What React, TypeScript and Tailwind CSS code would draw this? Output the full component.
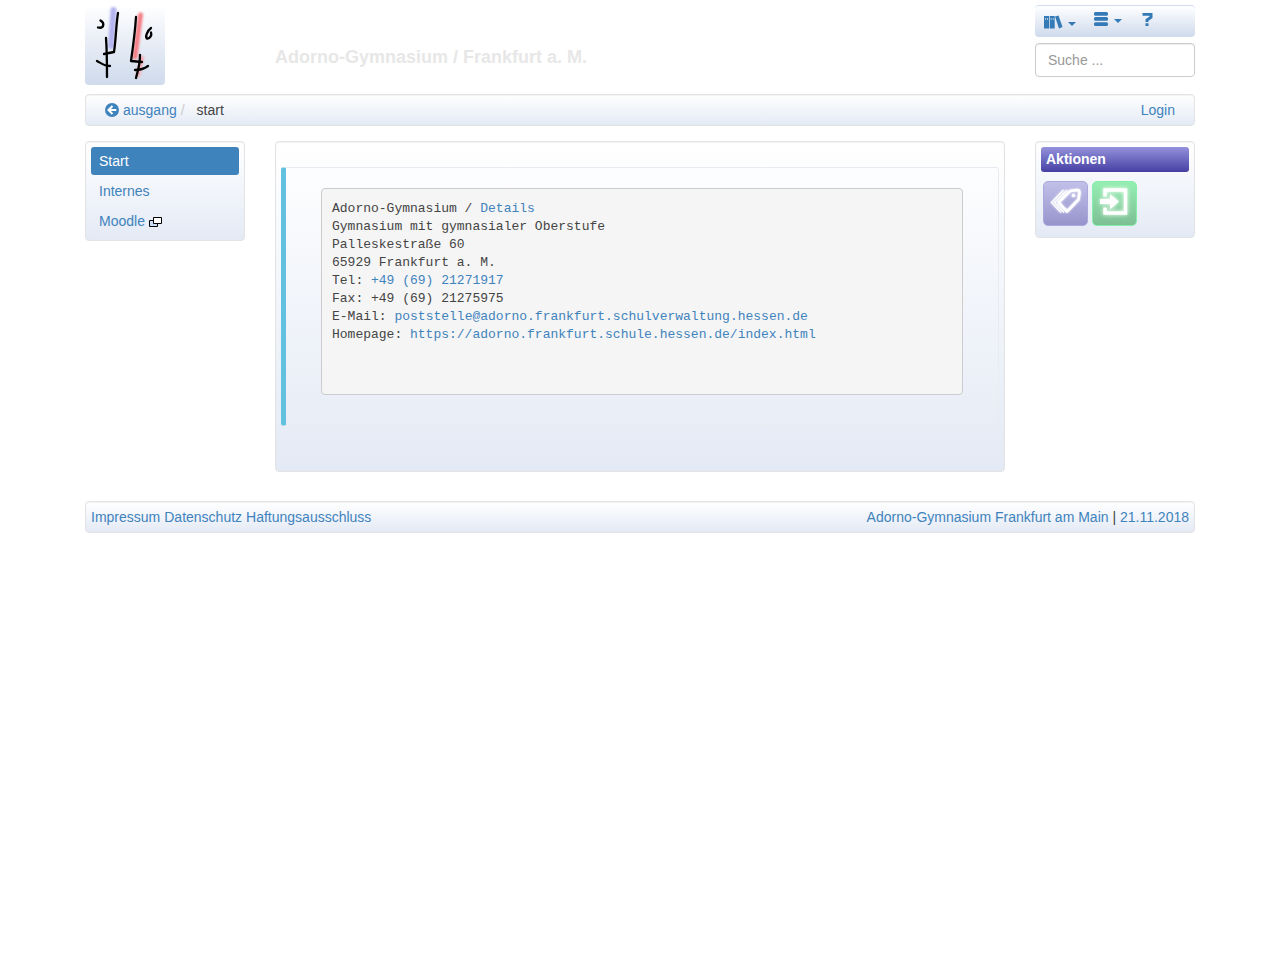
import type { ReactNode } from "react";
import { clsx } from "clsx";

const linkClass = "text-[#3f83bd] hover:underline";
const panelClass = "rounded border border-[#e3e3e3] bg-linear-to-b from-white to-[#e4eaf5] shadow-[inset_0_1px_1px_rgba(0,0,0,0.05)]";

const navItems = [
  { label: "Start", active: true },
  { label: "Internes" },
  { label: "Moodle", external: true },
];

function Logo() {
  return (
    <svg viewBox="0 0 80 80" className="block h-20 w-20" fill="none" strokeLinecap="round" strokeLinejoin="round" aria-label="Adorno-Gymnasium">
      <defs>
        <filter id="soft" x="-100%" y="-20%" width="300%" height="140%">
          <feGaussianBlur stdDeviation="1" />
        </filter>
      </defs>
      <g filter="url(#soft)">
        <path d="M28.500 5 26 41" stroke="#b4b4f0" strokeWidth="6" />
        <path d="M55.500 10 50 52" stroke="#f57f86" strokeWidth="5" />
        <path d="M57 53 53 70" stroke="#f8a9b0" strokeWidth="4" />
      </g>
      <g stroke="#000" strokeWidth="2.3">
        <path d="M33 8C31 20 31 34 29 47L19 49" />
        <path d="M21 33C22 46 22 58 22 72" />
        <path d="M12 56C16 58 19 61 25 61" />
        <path d="M51 12C50 28 48 42 46 56L57 57" />
        <path d="M55 50C55 60 53 65 51 73" />
        <path d="M50 65C55 65 59 64 63 61" />
        <path d="M15.500 15.500C20 18 19 24 13 22.500" />
        <path d="M66 23C62 26 60 32 62 33.500C65 34 67 30 66 27.500" />
      </g>
    </svg>
  );
}

function BooksIcon() {
  return (
    <svg width="19" height="14" viewBox="0 0 19 14" aria-hidden="true">
      <path fill="#337ab7" d="M0 1h5v12.500H0zM5.700 1h5v12.500h-5zM11 1.500 14.500.500 18.500 12 15 13.500z" />
      <path fill="#f2f5fa" d="M1 3h1v2H1zM3 3h1v2H3zM6.700 3h1v2h-1zM8.700 3h1v2h-1z" opacity=".6" />
    </svg>
  );
}

function BarsIcon() {
  return (
    <svg width="14" height="14" viewBox="0 0 14 14" fill="#337ab7" aria-hidden="true">
      <rect width="14" height="3.700" rx="1.500" />
      <rect y="5.100" width="14" height="3.700" rx="1.500" />
      <rect y="10.300" width="14" height="3.700" rx="1.500" />
    </svg>
  );
}

function QuestionIcon() {
  return (
    <svg width="11" height="14" viewBox="0 0 11 14" fill="#337ab7" aria-hidden="true">
      <path d="M.5 1H10.500V6L6.500 8.800V10H3.500V7.300L7.500 4.500V3.800H.5zM3.500 11.200H6.500V14H3.500z" />
    </svg>
  );
}

function Caret() {
  return <span className="ml-1 mt-1 inline-block border-x-4 border-t-4 border-x-transparent border-t-[#337ab7]" />;
}

function BackIcon() {
  return (
    <svg width="14" height="14" viewBox="0 0 14 14" aria-hidden="true">
      <circle cx="7" cy="7" r="7" fill="#3f83bd" />
      <path d="M11.300 7H4M7.500 3 3.500 7l4 4" fill="none" stroke="#fff" strokeWidth="2" />
    </svg>
  );
}

function ExternalIcon() {
  return (
    <svg width="13" height="10" viewBox="0 0 13 10" className="ml-1 inline-block" aria-hidden="true">
      <path d="M.5 3.500h8v6h-8z" fill="#c6dcf7" stroke="#000" />
      <path d="M4.500.500h8v6h-8z" fill="#fff" stroke="#000" />
    </svg>
  );
}

function TagsIcon() {
  return (
    <svg width="45" height="45" viewBox="0 0 45 45" fill="none" stroke="#fff" className="drop-shadow-[0_0_1px_#fff]" aria-hidden="true">
      <path d="M15.500 21.500 27 10 34 9Q36.500 9 36.500 11.500L35.500 18.500 24 30.500z" strokeWidth="2.600" strokeLinejoin="round" />
      <path d="M24 9 11.500 21.500 21 31.500M20.500 9 8.500 21.500 18 31.500" strokeWidth="1.300" />
      <circle cx="30.500" cy="14.500" r="1.800" fill="#fff" stroke="none" />
    </svg>
  );
}

function LoginIcon() {
  return (
    <svg width="45" height="45" viewBox="0 0 45 45" className="drop-shadow-[0_0_2px_#fff]" aria-hidden="true">
      <path d="M13 15.500V9H33.500V32H13V26.500" fill="none" stroke="#fff" strokeWidth="3.500" />
      <path d="M8 18h10v-5l9 7.500-9 8V23H8z" fill="#fff" />
    </svg>
  );
}

function ActionButton({ label, className, children }: { label: string; className: string; children: ReactNode }) {
  return (
    <button type="button" aria-label={label} className={clsx("h-[45px] w-[45px] overflow-hidden rounded-[5px] border", className)}>
      <div className="-m-px">{children}</div>
    </button>
  );
}

function Header() {
  return (
    <header className="grid grid-cols-12 gap-x-[30px]">
      <a href="#" className="col-span-2 h-20 w-20 rounded bg-linear-to-b from-white to-[#cfdaec]">
        <Logo />
      </a>
      <h1 className="col-span-8 pt-10 text-lg leading-6 font-bold text-[#e7e7e7]">Adorno-Gymnasium / Frankfurt a. M.</h1>
      <div className="col-span-2">
        <nav className="flex h-8 items-start rounded-sm border-t border-[#d3ddef] bg-linear-to-b from-white to-[#cfdaec] pt-1.5 pl-[9px]">
          <button type="button" aria-label="Bibliothek" className="mt-[3px] flex items-center">
            <BooksIcon />
            <span className="w-px" />
            <Caret />
          </button>
          <button type="button" aria-label="Menü" className="ml-[18px] flex items-center">
            <BarsIcon />
            <span className="w-0.5" />
            <Caret />
          </button>
          <button type="button" aria-label="Hilfe" className="ml-5">
            <QuestionIcon />
          </button>
        </nav>
        <input
          type="search"
          aria-label="Suche"
          placeholder="Suche ..."
          className="mt-1.5 h-[34px] w-full rounded border border-[#ccc] bg-white px-3 text-sm placeholder:text-[#999] shadow-[inset_0_1px_1px_rgba(0,0,0,0.075)]"
        />
      </div>
    </header>
  );
}

function Sidebar() {
  return (
    <nav className={clsx(panelClass, "col-span-2 flex flex-col gap-0.5 p-[5px]")}>
      {navItems.map((item) => (
        <a
          key={item.label}
          href="#"
          className={clsx("block rounded-[3px] px-2 py-1", item.active ? "bg-[#3f83bd] text-white" : linkClass)}
        >
          {item.label}
          {item.external && <ExternalIcon />}
        </a>
      ))}
    </nav>
  );
}

function Contact() {
  return (
    <main className={clsx(panelClass, "col-span-8 px-[5px] pt-[25px] pb-[45px]")}>
      <section className="rounded-[3px] border border-l-[5px] border-[#e9ebf0] border-l-[#62c1de] px-[35px] pt-5 pb-[30px]">
        <pre className="min-h-[207px] overflow-x-auto rounded border border-[#ccc] bg-[#f5f5f5] px-[10px] py-[11px] font-['Liberation_Mono',monospace] text-[13px] leading-[18px] text-[#444]">
          Adorno-Gymnasium / <a href="#" className={linkClass}>Details</a>{"\n"}
          Gymnasium mit gymnasialer Oberstufe{"\n"}
          Palleskestraße 60{"\n"}
          65929 Frankfurt a. M.{"\n"}
          Tel: <a href="#" className={linkClass}>+49 (69) 21271917</a>{"\n"}
          Fax: +49 (69) 21275975{"\n"}
          E-Mail: <a href="#" className={linkClass}>poststelle@adorno.frankfurt.schulverwaltung.hessen.de</a>{"\n"}
          Homepage: <a href="#" className={linkClass}>https://adorno.frankfurt.schule.hessen.de/index.html</a>
        </pre>
      </section>
    </main>
  );
}

function Actions() {
  return (
    <aside className={clsx(panelClass, "col-span-2 px-[5px] pt-[5px] pb-[11px]")}>
      <h2 className="h-[25px] rounded-[3px] bg-linear-to-b from-[#9692dc] to-[#473fa3] px-[5px] leading-[25px] font-bold text-white">Aktionen</h2>
      <div className="mt-[9px] flex gap-1 px-0.5">
        <ActionButton label="Schlagwörter" className="border-[#aaa8dc] bg-linear-to-b from-[#c1c0e9] to-[#9794cc]">
          <TagsIcon />
        </ActionButton>
        <ActionButton label="Anmelden" className="border-[#83efaa] bg-linear-to-b from-[#95efb2] to-[#7dbf94]">
          <LoginIcon />
        </ActionButton>
      </div>
    </aside>
  );
}

export default function App() {
  return (
    <div className="mx-auto max-w-[1140px] px-[15px] pt-[5px] font-['Liberation_Sans',Arial,sans-serif] text-sm leading-5 text-[#444]">
      <Header />
      <nav className={clsx(panelClass, "mt-[9px] flex items-center px-[19px] py-[5px]")}>
        <a href="#" className={clsx(linkClass, "flex items-center gap-1")}>
          <BackIcon />
          ausgang
        </a>
        <span className="px-1 text-[#ccc]">/</span>
        <span className="ml-2">start</span>
        <a href="#" className={clsx(linkClass, "ml-auto")}>Login</a>
      </nav>
      <div className="mt-[15px] grid grid-cols-12 items-start gap-x-[30px]">
        <Sidebar />
        <Contact />
        <Actions />
      </div>
      <footer className={clsx(panelClass, "mt-[29px] flex justify-between p-[5px]")}>
        <div className="flex gap-1">
          <a href="#" className={linkClass}>Impressum</a>
          <a href="#" className={linkClass}>Datenschutz</a>
          <a href="#" className={linkClass}>Haftungsausschluss</a>
        </div>
        <div>
          <a href="#" className={linkClass}>Adorno-Gymnasium Frankfurt am Main</a> | <a href="#" className={linkClass}>21.11.2018</a>
        </div>
      </footer>
    </div>
  );
}
